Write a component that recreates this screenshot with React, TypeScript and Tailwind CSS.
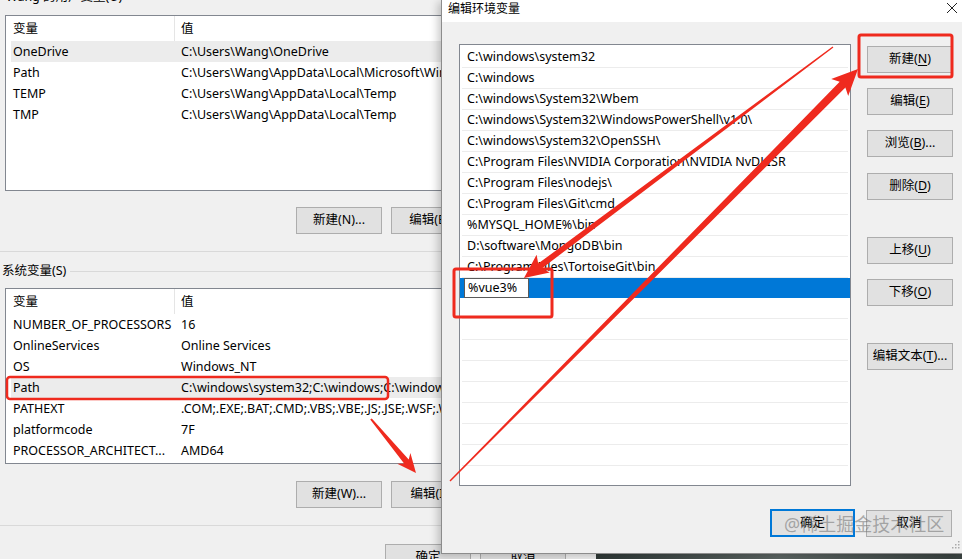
import React from "react";

type Row = [string, string];

const userRows: Row[] = [
  ["OneDrive", "C:\\Users\\Wang\\OneDrive"],
  ["Path", "C:\\Users\\Wang\\AppData\\Local\\Microsoft\\WindowsApps;"],
  ["TEMP", "C:\\Users\\Wang\\AppData\\Local\\Temp"],
  ["TMP", "C:\\Users\\Wang\\AppData\\Local\\Temp"],
];

const sysRows: Row[] = [
  ["NUMBER_OF_PROCESSORS", "16"],
  ["OnlineServices", "Online Services"],
  ["OS", "Windows_NT"],
  ["Path", "C:\\windows\\system32;C:\\windows;C:\\windows\\System32\\Wbem;C:\\windows\\System32\\WindowsPowerShell\\v1.0\\"],
  ["PATHEXT", ".COM;.EXE;.BAT;.CMD;.VBS;.VBE;.JS;.JSE;.WSF;.WSH;.MSC"],
  ["platformcode", "7F"],
  ["PROCESSOR_ARCHITECT...", "AMD64"],
];

const pathItems = [
  "C:\\windows\\system32",
  "C:\\windows",
  "C:\\windows\\System32\\Wbem",
  "C:\\windows\\System32\\WindowsPowerShell\\v1.0\\",
  "C:\\windows\\System32\\OpenSSH\\",
  "C:\\Program Files\\NVIDIA Corporation\\NVIDIA NvDLISR",
  "C:\\Program Files\\nodejs\\",
  "C:\\Program Files\\Git\\cmd",
  "%MYSQL_HOME%\\bin",
  "D:\\software\\MongoDB\\bin",
  "C:\\Program Files\\TortoiseGit\\bin",
];

function Btn({ children, className = "" }: { children: React.ReactNode; className?: string }) {
  return (
    <div
      className={
        "flex items-center justify-center h-[27px] w-[86px] shrink-0 border border-[#adadad] bg-[#e1e1e1] whitespace-nowrap " +
        className
      }
    >
      {children}
    </div>
  );
}

function VarList({ rows, highlight }: { rows: Row[]; highlight: number }) {
  return (
    <div className="ml-[5px] w-[567px] h-[176px] shrink-0 border border-[#828790] bg-white flex flex-col overflow-hidden">
      <div className="h-[25px] flex shrink-0">
        <div className="w-[169px] shrink-0 pl-[7px] pt-[1px] flex items-center border-r border-[#e5e5e5]">变量</div>
        <div className="pl-[6px] pt-[1px] flex items-center">值</div>
      </div>
      {rows.map((r, i) => (
        <div
          key={i}
          className={"ml-[5px] h-[21px] pt-[1px] flex items-center shrink-0 " + (i === highlight ? "bg-[#ececec]" : "")}
        >
          <div className="w-[163px] shrink-0 pl-[2px] whitespace-nowrap overflow-hidden">{r[0]}</div>
          <div className="pl-[7px] whitespace-nowrap">{r[1]}</div>
        </div>
      ))}
    </div>
  );
}

function U({ c }: { c: string }) {
  return <span className="underline underline-offset-2">{c}</span>;
}

function arrowPoints(
  tx: number,
  ty: number,
  hx: number,
  hy: number,
  tailW: number,
  shaftW: number,
  headLen: number,
  headW: number
) {
  const dx = hx - tx;
  const dy = hy - ty;
  const L = Math.hypot(dx, dy);
  const ux = dx / L;
  const uy = dy / L;
  const px = -uy;
  const py = ux;
  const bx = hx - ux * headLen;
  const by = hy - uy * headLen;
  const bx2 = hx - ux * (headLen - 4);
  const by2 = hy - uy * (headLen - 4);
  const pts = [
    [tx + (px * tailW) / 2, ty + (py * tailW) / 2],
    [bx2 + (px * shaftW) / 2, by2 + (py * shaftW) / 2],
    [bx + (px * headW) / 2, by + (py * headW) / 2],
    [hx, hy],
    [bx - (px * headW) / 2, by - (py * headW) / 2],
    [bx2 - (px * shaftW) / 2, by2 - (py * shaftW) / 2],
    [tx - (px * tailW) / 2, ty - (py * tailW) / 2],
  ];
  return pts.map((p) => p[0].toFixed(1) + "," + p[1].toFixed(1)).join(" ");
}

function LeftDialog() {
  return (
    <div className="w-[596px] h-full shrink-0 bg-[#f0f0f0] flex flex-col">
      <div className="h-[15px] shrink-0 pl-[6px]">
        <div className="-mt-[10px] leading-[14px] whitespace-nowrap">Wang 的用户变量(U)</div>
      </div>
      <VarList rows={userRows} highlight={0} />
      <div className="mt-[16px] flex pl-[296px] gap-[9px]">
        <Btn>新建(N)...</Btn>
        <Btn>编辑(E)...</Btn>
        <Btn>删除(D)</Btn>
      </div>
      <div className="mt-[17px] h-px shrink-0 bg-[#d9d9d9]" />
      <div className="mt-[12px] h-[14px] shrink-0 flex items-center pl-[2px]">
        <span className="whitespace-nowrap">系统变量(S)</span>
        <div className="ml-[4px] flex-1 h-px bg-[#d9d9d9]" />
      </div>
      <div className="mt-[10px]">
        <VarList rows={sysRows} highlight={3} />
      </div>
      <div className="mt-[17px] flex pl-[296px] gap-[9px]">
        <Btn>新建(W)...</Btn>
        <Btn>编辑(I)...</Btn>
        <Btn>删除(L)</Btn>
      </div>
      <div className="mt-[17px] h-px shrink-0 bg-[#d9d9d9]" />
      <div className="mt-[18px] flex pl-[385px] gap-[9px]">
        <Btn>确定</Btn>
        <Btn>取消</Btn>
      </div>
    </div>
  );
}

function RightDialog() {
  const empties = Array.from({ length: 10 });
  return (
    <div className="absolute left-[441px] top-0 w-[521px] h-[554px] bg-[#f0f0f0] border-l border-b border-[#8c8c8c] shadow-[-3px_2px_8px_rgba(0,0,0,0.22)] flex flex-col">
      <div className="h-[22px] shrink-0 bg-white flex items-start justify-between">
        <div className="pl-[6px] leading-[17px] text-[12px] whitespace-nowrap">编辑环境变量</div>
        <svg width="12" height="12" viewBox="0 0 12 12" className="mt-[2px] mr-[4px]">
          <path d="M1 1 L11 11 M11 1 L1 11" stroke="#222" strokeWidth="1" fill="none" />
        </svg>
      </div>
      <div className="mt-[22px] pl-[17px] flex">
        <div className="w-[392px] h-[442px] pt-[2px] border border-[#828790] bg-white overflow-hidden flex flex-col">
          {pathItems.map((t, i) => (
            <div
              key={i}
              className="h-[21px] shrink-0 mx-[2px] pt-[1px] border-b border-[#ececec] flex items-center pl-[5px] whitespace-nowrap"
            >
              {t}
            </div>
          ))}
          <div className="h-[20px] shrink-0 bg-[#0078d7] flex items-center pl-[4px]">
            <div className="h-[20px] w-[65px] border border-[#5a5a5a] bg-white flex items-center pl-[3px] pt-[1px]">%vue3%</div>
          </div>
          {empties.map((_, i) => (
            <div key={i} className="h-[21px] shrink-0 mx-[2px] border-b border-[#ececec]" />
          ))}
        </div>
        <div className="ml-[16px] pt-[2px] flex flex-col">
          <Btn className="w-[85px]">
            新建(<U c="N" />)
          </Btn>
          <Btn className="w-[85px] mt-[15px]">
            编辑(<U c="E" />)
          </Btn>
          <Btn className="w-[85px] mt-[15px]">
            浏览(<U c="B" />)...
          </Btn>
          <Btn className="w-[85px] mt-[16px]">
            删除(<U c="D" />)
          </Btn>
          <Btn className="w-[85px] mt-[37px]">
            上移(<U c="U" />)
          </Btn>
          <Btn className="w-[85px] mt-[15px]">
            下移(<U c="O" />)
          </Btn>
          <Btn className="w-[85px] mt-[37px]">
            编辑文本(<U c="T" />)...
          </Btn>
        </div>
      </div>
      <div className="mt-[23px] flex justify-end pr-[10px] gap-[11px] items-start">
        <div className="flex items-center justify-center h-[28px] w-[85px] border-2 border-[#0078d7] bg-[#e1e1e1]">
          确定
        </div>
        <Btn className="w-[85px] mt-[1px]">取消</Btn>
      </div>
      <svg width="10" height="10" viewBox="0 0 10 10" className="absolute right-[2px] bottom-[2px]">
        <rect x="8" y="0" width="1.5" height="1.5" fill="#aaa" />
        <rect x="5" y="3" width="1.5" height="1.5" fill="#aaa" />
        <rect x="8" y="3" width="1.5" height="1.5" fill="#aaa" />
        <rect x="2" y="6" width="1.5" height="1.5" fill="#aaa" />
        <rect x="5" y="6" width="1.5" height="1.5" fill="#aaa" />
        <rect x="8" y="6" width="1.5" height="1.5" fill="#aaa" />
      </svg>
    </div>
  );
}

export default function App() {
  const red = "#ef2a1e";
  return (
    <div className="relative w-[962px] h-[559px] overflow-hidden bg-[#f0f0f0] text-[12.5px] text-black font-['Noto_Sans','Noto_Sans_CJK_SC',sans-serif]">
      <div className="flex h-full">
        <LeftDialog />
        <div className="flex-1 h-full bg-gradient-to-r from-[#2f3937] via-[#5d6664] to-[#3a4341]" />
      </div>
      <RightDialog />
      <svg
        className="absolute inset-0 pointer-events-none"
        width="962"
        height="559"
        viewBox="0 0 962 559"
      >
        <rect x="7" y="377" width="381" height="22" rx="3" fill="none" stroke={red} strokeWidth="2.5" />
        <rect x="859" y="35" width="93" height="42" rx="2" fill="none" stroke={red} strokeWidth="3" />
        <rect x="454" y="269" width="98" height="48" rx="2" fill="none" stroke={red} strokeWidth="3" />
        <polygon points={arrowPoints(833, 47, 524, 278, 1.5, 6, 24, 22)} fill={red} />
        <polygon points={arrowPoints(450, 481, 858, 69, 1.5, 8, 26, 24)} fill={red} />
        <polygon points={arrowPoints(371, 419, 416, 473, 2, 6, 19, 17)} fill={red} />
      </svg>
      <div className="absolute left-[784px] top-[512px] text-[18px] leading-[24px] text-[rgba(110,110,110,0.55)] whitespace-nowrap pointer-events-none">
        @稀土掘金技术社区
      </div>
    </div>
  );
}
